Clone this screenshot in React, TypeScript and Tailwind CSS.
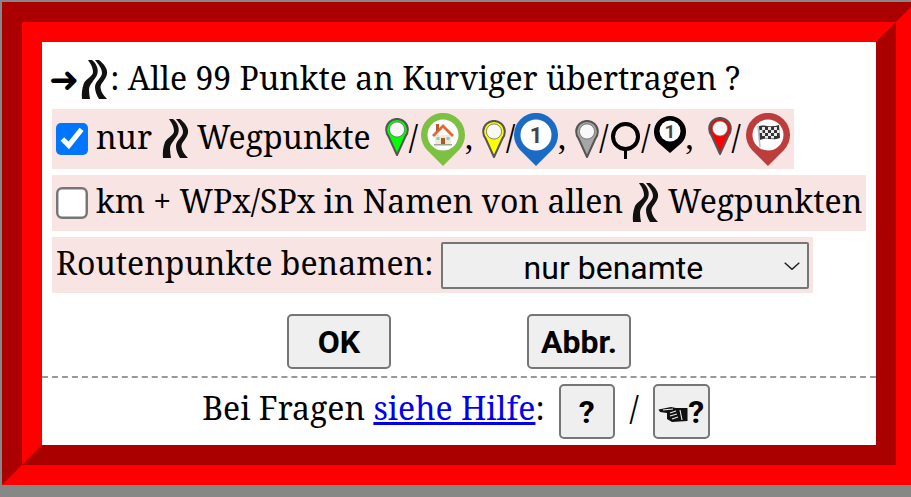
import React from "react";

function Road({ className = "" }: { className?: string }) {
  return (
    <svg viewBox="0 0 28 40" className={"w-[28px] h-[40px] shrink-0 blur-[0.7px] " + className} aria-hidden="true">
      <path d="M7 0 L11 0 C16 4 18 10 16 15 C14 20 8 24 8 30 C8 33 8.5 36 9 39 L1 39 C0.5 34 1 28 3 23 C6 18 12 16 12 12 C12 7 9 3 7 0 Z" fill="#111" />
      <path d="M14 0 L18 0 C23 4 27 9 26 14 C25 20 19 23 19.5 28 C20 32 23 36 26 39 L18 39 C15.5 35 14 31 14 27 C14 21 21 18 21 13 C21 8 17 4 14 0 Z" fill="#111" />
    </svg>
  );
}

function SmallPin({ fill, className = "" }: { fill: string; className?: string }) {
  return (
    <svg viewBox="0 0 24 38" className={"w-[24px] h-[38px] shrink-0 " + className} aria-hidden="true">
      <path d="M12 37 L3.6 18.5 A10.8 10.8 0 1 1 20.4 18.5 Z" fill={fill} stroke="#555" strokeWidth="2" strokeLinejoin="round" />
      <circle cx="12" cy="11.5" r="7.6" fill="#f8f8f8" stroke="#666" strokeWidth="0.8" />
    </svg>
  );
}

function BigPin({ fill, children, className = "" }: { fill: string; children?: React.ReactNode; className?: string }) {
  return (
    <svg viewBox="0 0 44 53" className={"w-[44px] h-[53px] shrink-0 " + className} aria-hidden="true">
      <path d="M22 53 L6 37 A22 22 0 1 1 38 37 Z" fill={fill} />
      <circle cx="22" cy="22" r="15.5" fill="#fff" />
      {children}
    </svg>
  );
}

function Slash({ className = "" }: { className?: string }) {
  return <span className={"shrink-0 pb-[4px] " + className}>/</span>;
}

function Comma({ className = "" }: { className?: string }) {
  return <span className={"shrink-0 pb-[4px] " + className}>,</span>;
}

function Row({ children, className = "" }: { children: React.ReactNode; className?: string }) {
  return <div className={"flex items-center bg-[#f9e4e4] ml-[10px] w-fit px-[4px] " + className}>{children}</div>;
}

const btn =
  "bg-[#efefef] border-2 border-[#767676] rounded-[5px] font-['Roboto',sans-serif] font-bold text-[32px] leading-none text-black flex items-center justify-center";

export default function App() {
  return (
    <div className="w-[911px] h-[497px] overflow-hidden bg-[#868885] pl-[2px] pt-[2px] font-['Noto_Serif','Liberation_Serif',serif] text-[32px] text-black">
      <div className="w-[914px] h-[483px] border-[40px] [border-style:groove] border-[#ff0000] bg-white flex flex-col">
        <div className="flex items-center h-[40px] mt-[18px] pl-[7px]">
          <span className="text-[36px] leading-none font-['DejaVu_Sans',sans-serif]">➜</span>
          <Road className="ml-[2px]" />
          <span className="ml-[1px] pb-[4px]">: Alle 99 Punkte an Kurviger übertragen ?</span>
        </div>

        <Row className="mt-[9px] h-[60px]">
          <input type="checkbox" defaultChecked className="[zoom:2.46] m-0 shrink-0 accent-[#0075ff]" />
          <span className="ml-[8px] pb-[4px]">nur</span>
          <Road className="ml-[10px]" />
          <span className="ml-[7px] pb-[4px]">Wegpunkte</span>
          <SmallPin fill="#00ff00" className="ml-[14px] -mt-[4px]" />
          <Slash className="mr-[3px]" />
          <BigPin fill="#7cc142">
            <path d="M14 22 H30 V31 H14 Z" fill="#f3ead2" />
            <path d="M22 11 L33 22 L31 24 L22 15 L13 24 L11 22 Z" fill="#dd6b35" />
            <path d="M15 11 H18 V16 L15 19 Z" fill="#c0562c" />
            <rect x="20" y="25" width="4" height="6.5" fill="#a65a33" />
            <rect x="15.5" y="24" width="3" height="3" fill="#8cc4d8" />
            <rect x="25.5" y="24" width="3" height="3" fill="#8cc4d8" />
            <rect x="13" y="31" width="18" height="1.5" fill="#9aa89a" />
          </BigPin>
          <Comma />
          <SmallPin fill="#ffff00" className="ml-[9px]" />
          <Slash className="-mr-[1px]" />
          <BigPin fill="#1b6ac4">
            <text x="22" y="30" textAnchor="middle" fontFamily="Roboto, sans-serif" fontWeight="700" fontSize="22" fill="#444">1</text>
          </BigPin>
          <Comma />
          <SmallPin fill="#a6a6a6" className="ml-[9px]" />
          <Slash className="mr-[2px]" />
          <svg viewBox="0 0 31 37" className="w-[31px] h-[37px] shrink-0 mt-[2px]" aria-hidden="true">
            <circle cx="15.5" cy="14.5" r="12.5" fill="none" stroke="#000" strokeWidth="4" />
            <rect x="14" y="26" width="3" height="11" fill="#000" />
          </svg>
          <Slash className="mr-[3px]" />
          <svg viewBox="0 0 32 38" className="w-[32px] h-[38px] shrink-0 -mt-[10px]" aria-hidden="true">
            <path d="M16 38 L4.5 28 A16 16 0 1 1 27.5 28 Z" fill="#000" />
            <circle cx="16" cy="16" r="10.5" fill="#fff" />
            <text x="16" y="23" textAnchor="middle" fontFamily="Roboto, sans-serif" fontWeight="700" fontSize="19" fill="#444">1</text>
          </svg>
          <Comma />
          <SmallPin fill="#ff0000" className="ml-[14px] -mt-[6px]" />
          <Slash className="mr-[5px]" />
          <BigPin fill="#bd3d3d">
            <path d="M12 13 L14 34" stroke="#bbb" strokeWidth="1.5" />
            <path d="M13 13 C18 11 24 15 33 12 L34 25 C26 28 21 24 14 27 Z" fill="#333" />
            <g fill="#e8e8e8">
              <rect x="16" y="14" width="3" height="3" />
              <rect x="22" y="14" width="3" height="3" />
              <rect x="28" y="14" width="3" height="3" />
              <rect x="13.5" y="17" width="3" height="3" />
              <rect x="19" y="17" width="3" height="3" />
              <rect x="25" y="17" width="3" height="3" />
              <rect x="31" y="17" width="2.5" height="3" />
              <rect x="16" y="20" width="3" height="3" />
              <rect x="22" y="20" width="3" height="3" />
              <rect x="28" y="20" width="3" height="3" />
              <rect x="19" y="23" width="3" height="2.5" />
              <rect x="25" y="23" width="3" height="2.5" />
            </g>
          </BigPin>
        </Row>

        <Row className="mt-[6px] h-[56px]">
          <input type="checkbox" className="[zoom:2.46] m-0 shrink-0" />
          <span className="ml-[8px] pb-[4px]">km + WPx/SPx in Namen von allen</span>
          <Road className="ml-[9px]" />
          <span className="ml-[8px] pb-[4px]">Wegpunkten</span>
        </Row>

        <Row className="mt-[6px] h-[56px]">
          <span className="pb-[4px]">Routenpunkte benamen:</span>
          <div className="relative ml-[8px]">
            <select className="block appearance-none w-[368px] h-[47px] pr-[24px] bg-[#efefef] border-2 border-[#767676] rounded-[2px] font-['Roboto',sans-serif] text-[32px] text-black [text-align-last:center]">
              <option>nur benamte</option>
            </select>
            <svg viewBox="0 0 16 8" className="absolute right-[9px] top-[20px] w-[16px] h-[8px] pointer-events-none" aria-hidden="true">
              <path d="M0.7 0.7 L8 7.3 L15.3 0.7" fill="none" stroke="#222" strokeWidth="1.5" />
            </svg>
          </div>
        </Row>

        <div className="flex justify-center gap-[136px] mt-[21px]">
          <button className={btn + " w-[104px] h-[55px]"}>OK</button>
          <button className={btn + " w-[104px] h-[55px]"}>Abbr.</button>
        </div>

        <div className="mt-[7px] border-t-2 border-dashed border-[#999999]" />

        <div className="flex items-center justify-center mt-[6px] h-[55px] -ml-[6px]">
          <span className="pb-[8px]">
            Bei Fragen <a href="#" className="text-[#0000ee] underline">siehe Hilfe</a>:
          </span>
          <button className={btn + " ml-[14px] w-[56px] h-[55px] text-[30px]"}>?</button>
          <span className="ml-[15px] mr-[14px] pb-[8px]">/</span>
          <button className={btn + " w-[57px] h-[55px] text-[30px]"}>
            <svg viewBox="0 0 30 17" className="w-[30px] h-[17px] shrink-0 mt-[6px]" aria-hidden="true">
              <path d="M0.5 3.5 L13 1 L18 2 L29.5 2 L29.5 15 L14 16 L9 13 L9 7 L2 6 Z" fill="#111" />
              <path d="M5 4 L15 3 M12 7 L18 5 M12 10 L19 8 M14 13 L20 11 M22 4 L24 14" stroke="#efefef" strokeWidth="1.1" fill="none" />
            </svg>
            <span>?</span>
          </button>
        </div>
      </div>
    </div>
  );
}
